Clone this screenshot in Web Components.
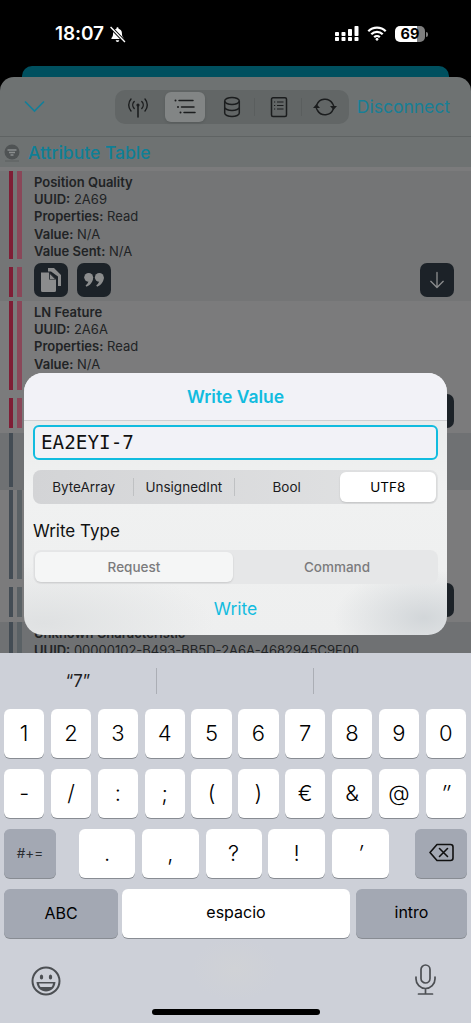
<!DOCTYPE html>
<html lang="es"><head><meta charset="utf-8"><title>Write Value</title>
<style>
html,body{margin:0;background:#000;font-family:Inter,"Noto Sans",sans-serif}
</style></head><body>
<phone-screen>
  <status-bar slot="status"></status-bar>
  <ble-sheet slot="sheet">
    <sheet-toolbar></sheet-toolbar>
    <table-heading>Attribute Table</table-heading>
    <attr-row tone="a" accent="red" h1="88" h2="30" bottom="4" actions="3">
      <b class="t">Position Quality</b>
    </attr-row>
  </ble-sheet>
  <write-dialog slot="dialog"></write-dialog>
  <key-board slot="keyboard"></key-board>
</phone-screen>
<script>
function def(name, css, html, extra){
  customElements.define(name, class extends HTMLElement{
    constructor(){super();const r=this.attachShadow({mode:'open'});r.innerHTML='<style>'+css+'</style>'+html;}
    connectedCallback(){extra&&extra.call(this,this.shadowRoot)}
  });
}
def('phone-screen',`
:host{display:block;width:471px;height:1023px;position:relative;overflow:hidden;background:#000}
.col{display:flex;flex-direction:column;height:100%}
.tab{height:11px;margin:0 22px;background:#00505f;border-radius:10px 10px 0 0;flex:none}
.sheet{flex:1;min-height:0;display:flex}
.overlay{position:absolute;left:24px;top:373px}
`,`<div class="col"><slot name="status"></slot><div class="tab"></div><div class="sheet"><slot name="sheet"></slot></div><slot name="keyboard"></slot></div><div class="overlay"><slot name="dialog"></slot></div>`);

def('status-bar',`
:host{display:block;height:66px;flex:none;color:#fff}
.w{display:flex;align-items:center;height:100%;box-sizing:border-box;padding:0 43px 0 55px;position:relative}
.time{font:600 19px/20px Inter,sans-serif;margin-top:2px;letter-spacing:-.1px}
svg{display:block;flex:none}
.sp{flex:1}
.bat{width:30px;height:16px;border-radius:5px;background:linear-gradient(90deg,#fff 0 22px,#7f7f7f 22px);color:#000;font:700 14.5px/16px Inter,sans-serif;text-align:center;margin-left:8px}
.nub{width:2px;height:5px;background:#7f7f7f;border-radius:0 2px 2px 0;margin-left:1px}
`,`<div class="w">
<span class="time">18:07</span>
<svg style="margin-left:5px;margin-top:2px" width="17" height="17" viewBox="0 0 16 16"><path d="M8 1.2c.6 0 1 .4 1 1v.5c2.200.5 3.200 2.300 3.200 4.500 0 2 .6 3 1.500 4v1H2.300v-1c.9-1 1.500-2 1.500-4 0-2.200 1-4 3.200-4.500v-.5c0-.6.4-1 1-1zM6.400 13.500h3.200c0 .9-.7 1.500-1.600 1.500s-1.600-.6-1.600-1.500z" fill="#fff"/><path d="M1.500 1 15 15" stroke="#000" stroke-width="3"/><path d="M1.500 1 15 15" stroke="#fff" stroke-width="1.300"/></svg>
<span class="sp"></span>
<svg style="margin-top:2px" width="24" height="16" viewBox="0 0 24 16" fill="#fff"><rect x="0" y="6" width="4" height="4" rx=".8"/><rect x="0" y="11" width="4" height="4" rx=".8"/><rect x="6.500" y="6" width="4" height="4" rx=".8"/><rect x="6.500" y="11" width="4" height="4" rx=".8"/><rect x="13" y="3" width="4" height="7" rx=".8"/><rect x="13" y="11" width="4" height="4" rx=".8"/><rect x="19.500" y="0" width="4" height="10" rx=".8"/><rect x="19.500" y="11" width="4" height="4" rx=".8"/></svg>
<svg style="margin-left:8px;margin-top:1px" width="20" height="15" viewBox="0 0 20 15" fill="none" stroke="#fff" stroke-width="2.300"><path d="M1.300 5.200a12.300 12.300 0 0 1 17.400 0"/><path d="M4.300 8.300a8 8 0 0 1 11.400 0"/><path d="M7.200 11.200a4 4 0 0 1 5.600 0"/><circle cx="10" cy="13.300" r="1" fill="#fff" stroke-width="1"/></svg>
<span class="bat" style="margin-top:2px">69</span><span class="nub" style="margin-top:2px"></span>
</div>`);

def('ble-sheet',`
:host{display:block;flex:1;background:#6e7272;border-radius:14px 14px 0 0;overflow:hidden;min-width:0;font:13px/17.17px Inter,sans-serif}
`,`<slot></slot>`);

const I={
 ant:`<svg width="24" height="24" viewBox="0 0 24 24" fill="none" stroke="#1b1d1e" stroke-width="1.400" stroke-linecap="round"><path d="M12 11v11" stroke-width="1.600"/><circle cx="12" cy="10" r="1.600" fill="#1b1d1e" stroke="none"/><path d="M8.200 6.500a5 5 0 0 0 0 7M15.800 6.500a5 5 0 0 1 0 7M5 4a9 9 0 0 0 0 12M19 4a9 9 0 0 1 0 12"/></svg>`,
 list:`<svg width="24" height="24" viewBox="0 0 24 24" fill="none" stroke="#1b1d1e" stroke-width="1.500" stroke-linecap="round"><path d="M6 5.500h14M8.500 12H21M11 17.500h11"/><circle cx="2.500" cy="5.500" r="1" fill="#1b1d1e" stroke="none"/><circle cx="5" cy="12" r="1" fill="#1b1d1e" stroke="none"/><circle cx="7.500" cy="17.500" r="1" fill="#1b1d1e" stroke="none"/></svg>`,
 db:`<svg width="24" height="24" viewBox="0 0 24 24" fill="none" stroke="#1b1d1e" stroke-width="1.500"><ellipse cx="12" cy="6" rx="7.300" ry="3.500"/><path d="M4.700 6v12c0 2 3.300 3.500 7.300 3.500s7.300-1.500 7.300-3.500V6M4.700 12c0 2 3.300 3.500 7.300 3.500s7.300-1.500 7.300-3.500"/></svg>`,
 book:`<svg width="24" height="24" viewBox="0 0 24 24" fill="none" stroke="#1b1d1e" stroke-width="1.500"><rect x="4.500" y="2.800" width="15" height="18.700" rx="1.500"/><path d="M10 7h6.500M10 10.500h6.500M10 14h6.500" stroke-width="1.200"/><path d="M7 7h1.200M7 10.500h1.200M7 14h1.200" stroke-width="1.200"/></svg>`,
 sync:`<svg width="24" height="24" viewBox="0 0 24 24" fill="none" stroke="#1b1d1e" stroke-width="1.500"><path d="M3.700 10A8.800 8.800 0 0 1 19.500 8.500L20.800 11M20.300 14a8.800 8.800 0 0 1-15.800 1.500L3.200 13"/><path d="M17 11h7l-3.500 4zM7 13H0l3.500-4z" fill="#1b1d1e" stroke="none"/></svg>`
};
def('sheet-toolbar',`
:host{display:flex;align-items:center;height:60px;box-sizing:border-box;padding:0 21px 0 24px;border-bottom:1px solid #5f6363}
.chev{flex:none;display:block}
.seg{margin-left:auto;width:234px;height:34px;border-radius:10px;background:#626666;display:grid;grid-template-columns:repeat(5,1fr);flex:none;position:relative}
.c{display:flex;align-items:center;justify-content:center;position:relative}
.c.on::before{content:"";position:absolute;inset:2px 3px;background:#828585;border-radius:6px;box-shadow:0 1px 3px #0002}
.c svg{position:relative}
.c.d::after{content:"";position:absolute;right:0;top:8px;bottom:8px;width:1px;background:#5a5e5e}
.dis{margin-left:8px;font:400 17.500px/24px Inter,sans-serif;color:#177f96;white-space:nowrap}
`,`<svg class="chev" width="21" height="13" viewBox="0 0 21 13" fill="none" stroke="#147f99" stroke-width="1.700" stroke-linecap="round"><path d="M1.500 2l9 9 9-9"/></svg>
<div class="seg"><div class="c">${I.ant}</div><div class="c on">${I.list}</div><div class="c d">${I.db}</div><div class="c d">${I.book}</div><div class="c">${I.sync}</div></div>
<span class="dis">Disconnect</span>`);

def('table-heading',`
:host{display:flex;align-items:center;height:30px;padding:1px 0 0 4px;box-sizing:content-box;height:29px;gap:8px;color:#0f7f96;font:500 17.500px/22px Inter,sans-serif;border-bottom:4px solid #7b7b7c}
svg{flex:none}
`,`<svg width="16" height="18" viewBox="0 0 16 18"><circle cx="8" cy="8" r="7.500" fill="#4f5354"/><path d="M3.500 6h9M5 8.500h6M6.500 11h3" stroke="#8b8e8e" stroke-width="1.400"/><path d="M1 17h14" stroke="#5a5e5e"/></svg><slot></slot>`);

const BTN={
 copy:`<svg width="24" height="26" viewBox="0 0 24 26"><path d="M9 1h6l7 7v11h-3V9.500L12 4.500H9z" fill="#8b8c8d"/><path d="M2 5.500h8l7 7v11a1.500 1.500 0 0 1-1.500 1.500h-12A1.500 1.500 0 0 1 2 23.500z" fill="#8b8c8d"/><path d="M10 5.500v7h7z" fill="#1c2228"/><path d="M10.800 7l5 5h-5z" fill="#8b8c8d"/></svg>`,
 quote:`<svg width="22" height="16" viewBox="0 0 24 18" fill="#8b8c8d"><circle cx="6" cy="6" r="5"/><path d="M11 6c0 5-3 9-7.500 10.500L2.500 15C5 13.500 6 11 6 9z"/><circle cx="18" cy="6" r="5"/><path d="M23 6c0 5-3 9-7.500 10.500L14.500 15C17 13.500 18 11 18 9z"/></svg>`,
 down:`<svg width="16" height="20" viewBox="0 0 18 20" fill="none" stroke="#8b8c8d" stroke-width="1.500" stroke-linecap="round"><path d="M9 1.500v17M2 11.500l7 7 7-7"/></svg>`
};
def('icon-btn',`
:host{display:flex;align-items:center;justify-content:center;width:34px;height:34px;border-radius:7px;background:#1c2228;flex:none}
`,``,function(r){if(!r.querySelector('svg'))r.innerHTML+=BTN[this.getAttribute('kind')];});

def('attr-row',`
:host{display:block;box-sizing:border-box;color:#212325}
.sec{display:flex;position:relative}
.bars{flex:none;width:34px;display:flex;padding-left:8.500px;gap:4px;box-sizing:border-box}
.bars i{display:block;width:4.500px}
.txt{flex:1;min-width:0;padding-top:3px}
.acts{flex:1;display:flex;gap:9px;margin-top:-4px;align-items:flex-start}
.acts .r{margin-left:auto;margin-right:17px}
`,`<div class="sec s1"><div class="bars"><i class="a"></i><i class="b"></i></div><div class="txt"><slot></slot></div></div>
<div class="sec s2"><div class="bars"><i class="a"></i><i class="b"></i></div><div class="acts"></div></div>`,
function(r){
  const a=this.getAttribute.bind(this);
  this.style.background={a:'#747576',b:'#7b7b7c',c:'#6f7173'}[a('tone')];
  this.style.paddingBottom=(a('bottom')||0)+'px';
  const red=a('accent')==='red';
  r.querySelectorAll('.a').forEach(e=>e.style.background=red?'#7f1d35':'#434c54');
  r.querySelectorAll('.b').forEach(e=>e.style.background=red?'#8a4759':'#5a6165');
  const s1=r.querySelector('.s1'),s2=r.querySelector('.s2');
  s1.style.height=a('h1')+'px';
  if(a('single')!=null)r.querySelector('.s1 .b').style.visibility='hidden';
  if(a('h2')){s2.style.height=a('h2')+'px';s2.style.marginTop='8px';}else s2.style.display='none';
  const acts=r.querySelector('.acts'),n=a('actions');
  if(acts.children.length===0&&n){
    if(n==='3')acts.innerHTML='<icon-btn kind="copy"></icon-btn><icon-btn kind="quote"></icon-btn>';
    acts.innerHTML+='<icon-btn class="r" kind="down"></icon-btn>';
  }
});

def('seg-control',`
:host{display:grid;grid-template-columns:var(--cols,repeat(4,1fr));box-sizing:border-box;height:34px;border-radius:8px;padding:2px;background:var(--bg)}
`,`<slot></slot>`);
def('seg-item',`
:host{display:flex;align-items:center;justify-content:center;position:relative;border-radius:6px;font:var(--f,400 13.500px/18px Inter,sans-serif);color:var(--c,#1c1c1e);white-space:nowrap;box-sizing:border-box}
:host([on]){background:var(--on,#fff);box-shadow:0 1px 2px #0002;color:var(--conn,#000)}
:host([sep])::after{content:"";position:absolute;right:1px;top:6px;bottom:6px;width:1px;background:#bfc1c3}
`,`<slot></slot>`);

def('write-dialog',`
:host{display:block;width:423px;height:262px;border-radius:19px;overflow:hidden;color:#111;
 background:radial-gradient(90px 50px at 400px 245px,#d2d6d9,transparent),radial-gradient(170px 60px at 20px 250px,#dfe1e2,transparent),linear-gradient(#e6e8e8,#f0f1f1 45%,#eeefef)}
.head{height:47px;background:#f2f2f7;border-bottom:1px solid #cfd0d2;display:flex;align-items:center;justify-content:center;color:#12bcdf;font:600 17.500px/24px Inter,sans-serif}
.body{padding:4px 9px 0;display:flex;flex-direction:column}
.inp{height:35px;box-sizing:border-box;border:2px solid #12bcdf;border-radius:6px;background:#f2f2f7;display:flex;align-items:center;padding-left:6px;font:400 19.300px/24px "DejaVu Sans Mono",monospace;color:#111}
.s1{margin-top:10px;--bg:linear-gradient(90deg,#d3d4d6,#e2e3e4)}
.wt{margin-top:17px;font:400 17px/20px Inter,sans-serif;color:#111}
.s2{margin-top:9px;--cols:198px 1fr;--bg:#e6e7e8;--on:#f5f6f6;--c:#7b7b7d;--conn:#7b7b7d;--f:500 13.500px/18px Inter,sans-serif}
.go{align-self:center;margin-top:13px;color:#12bcdf;font:400 17.500px/24px Inter,sans-serif}
`,`<div class="head">Write Value</div><div class="body">
<div class="inp">EA2EYI-7</div>
<seg-control class="s1"><seg-item sep style="padding-right:3px">ByteArray</seg-item><seg-item sep style="padding-right:3px">UnsignedInt</seg-item><seg-item style="padding-left:2px">Bool</seg-item><seg-item on style="margin-left:4px">UTF8</seg-item></seg-control>
<div class="wt">Write Type</div>
<seg-control class="s2"><seg-item on>Request</seg-item><seg-item style="padding-left:5px">Command</seg-item></seg-control>
<div class="go">Write</div></div>`);

def('kb-key',`
:host{display:flex;align-items:center;justify-content:center;height:49px;border-radius:6px;background:#fff;box-shadow:0 1px 0 #888c93;color:#000;font:300 22px/26px Inter,sans-serif;flex:none;box-sizing:border-box;padding-bottom:2px}
:host([gray]){background:#a3a8b3}
:host([small]){font-size:13.500px;font-weight:400;color:#2a2c30}
:host([label]){font-size:16px;font-weight:400;padding-bottom:4px}
:host([slant]){font-style:italic}
`,`<slot></slot>`);

const back=`<svg width="25" height="19" viewBox="0 0 25 19" fill="none" stroke="#111" stroke-width="1.600" stroke-linejoin="round" stroke-linecap="round"><path d="M8 1.500h13.500a2.500 2.500 0 0 1 2.500 2.500v11a2.500 2.500 0 0 1-2.500 2.500H8L1 9.500z"/><path d="M10.500 5.500l8 8M18.500 5.500l-8 8"/></svg>`;
def('key-board',`
:host{display:block;height:370px;flex:none;background:radial-gradient(44px 32px at 235px 316px,#d0d2d6,transparent),#cdd0d8;box-sizing:border-box;position:relative}
.sug{height:56px;display:grid;grid-template-columns:156px 157px 158px;align-items:center}
.sug div{height:26px;display:flex;align-items:center;justify-content:center;font:400 17px/24px Inter,sans-serif;color:#1c1c1e}
.sug div+div{border-left:1px solid #abaeb5}
.row{display:flex;padding:0 4px;justify-content:space-between;margin-bottom:11px}
.n{padding-right:5px}
.n kb-key{width:40.300px}
.r3 .sp{width:23px;flex:none}.r3 .m{margin-left:6.700px}
.low{display:flex;justify-content:space-between;padding:17px 35px 0 31px;align-items:flex-start}
.bar{position:absolute;left:152px;top:356px;width:168px;height:6px;border-radius:3px;background:#000}
`,`<div class="sug"><div>“7”</div><div></div><div></div></div>
<div class="row n" id="r1"></div><div class="row n" id="r2"></div>
<div class="row r3"><kb-key gray small style="width:52px">#+=</kb-key><span class="sp"></span>
<kb-key style="width:56px">.</kb-key><kb-key class="m" style="width:57px">,</kb-key><kb-key class="m" style="width:56px">?</kb-key><kb-key class="m" style="width:57px">!</kb-key><kb-key class="m" slant style="width:57px">′</kb-key><span class="sp" style="width:26px"></span><kb-key gray style="width:52px">${back}</kb-key></div>
<div class="row"><kb-key gray label style="width:114px;padding-bottom:1px">ABC</kb-key><kb-key label style="width:228px;margin-left:4px">espacio</kb-key><kb-key gray label style="width:111px;margin-left:6px">intro</kb-key></div>
<div class="low"><svg width="30" height="30" viewBox="0 0 30 30" fill="none" stroke="#4c4f53" stroke-width="2"><circle cx="15" cy="15" r="13.500"/><ellipse cx="10.500" cy="11" rx="1.700" ry="2.500" fill="#4c4f53" stroke="none"/><ellipse cx="19.500" cy="11" rx="1.700" ry="2.500" fill="#4c4f53" stroke="none"/><path d="M5.500 16h19c-.5 6-4.500 9.500-9.500 9.500S6 22 5.500 16z" fill="#4c4f53" stroke="none"/><path d="M8 17.500h14c-.3 2-1 3-1.500 3.500h-11C9 20.500 8.300 19.500 8 17.500z" fill="#cdd0d8" stroke="none"/></svg>
<svg width="21" height="31" viewBox="0 0 21 31" fill="none" stroke="#4c4f53" stroke-width="1.700" stroke-linecap="round" style="margin-top:-2px"><rect x="6" y="1" width="9" height="18" rx="4.500"/><path d="M1 13v2a9.500 9.500 0 0 0 19 0v-2M10.500 24.500V29.500M3.500 30h14"/></svg></div>
<div class="bar"></div>`,
function(r){
  const f=(id,s)=>{const e=r.getElementById(id);if(!e.children.length)e.innerHTML=s.map(k=>`<kb-key${k==='″'?' slant':''}>${k}</kb-key>`).join('');};
  f('r1',[...'1234567890']);f('r2',['-','/',':',';','(',')','€','&amp;','@','″']);
});
const sheet=document.querySelector('ble-sheet');
const row=(attrs,html)=>{const e=document.createElement('attr-row');for(const k in attrs)e.setAttribute(k,attrs[k]);e.innerHTML=html;sheet.appendChild(e);};
const first=sheet.querySelector('attr-row');
const L=(b,v)=>`<div><b style="font-weight:600">${b}</b> ${v}</div>`;
const T=t=>`<div style="font-weight:600">${t}</div>`;
first.innerHTML=T('Position Quality')+L('UUID:','2A69')+L('Properties:','Read')+L('Value:','N/A')+L('Value Sent:','N/A');
row({tone:'b',accent:'red',h1:89,h2:30,bottom:5,actions:'1'},T('LN Feature')+L('UUID:','2A6A')+L('Properties:','Read')+L('Value:','N/A'));
row({tone:'c',accent:'slate',h1:54,bottom:3,single:''},'');
row({tone:'b',accent:'slate',h1:89,h2:30,bottom:5,actions:'1'},'');
row({tone:'c',accent:'slate',h1:60},T('Unknown Characteristic')+L('UUID:','00000102-B493-BB5D-2A6A-4682945C9F00'));
</script>
</body></html>
